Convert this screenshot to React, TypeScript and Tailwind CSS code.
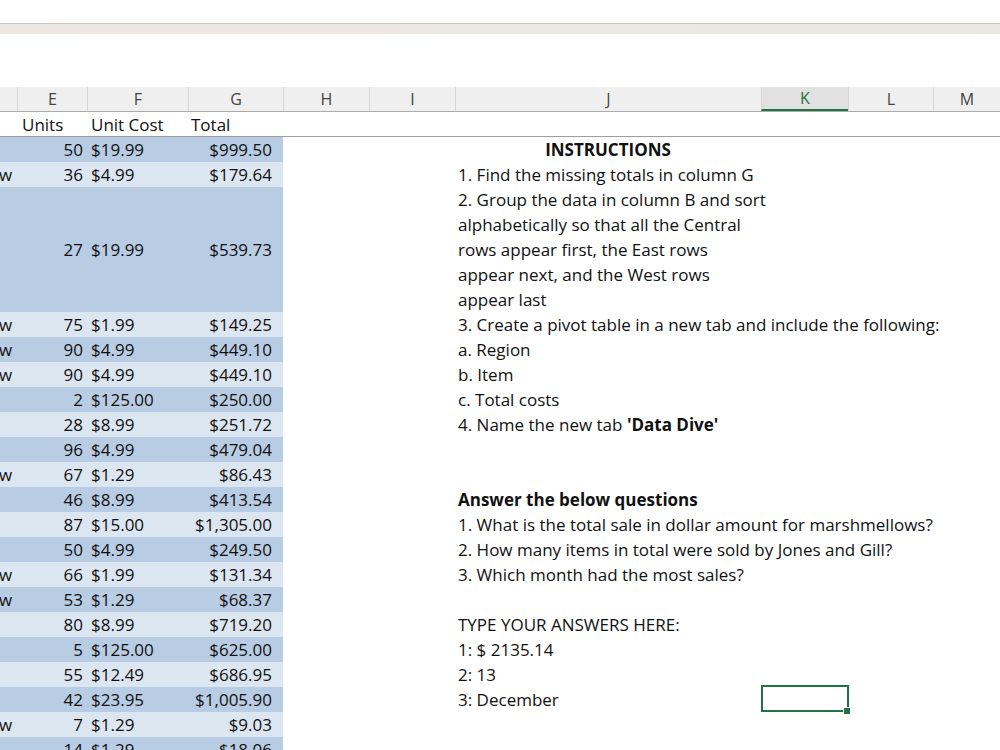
import React from "react";

type Row = {
  h?: number;
  dark: boolean;
  w?: boolean;
  u: string;
  c: string;
  t: string;
  j?: React.ReactNode;
  jc?: boolean;
  sel?: boolean;
};

const rows: Row[] = [
  { dark: true, u: "50", c: "$19.99", t: "$999.50", j: <span className="font-bold">INSTRUCTIONS</span>, jc: true },
  { dark: false, w: true, u: "36", c: "$4.99", t: "$179.64", j: "1. Find the missing totals in column G" },
  {
    h: 125,
    dark: true,
    u: "27",
    c: "$19.99",
    t: "$539.73",
    j: (
      <>
        2. Group the data in column B and sort
        <br />
        alphabetically so that all the Central
        <br />
        rows appear first, the East rows
        <br />
        appear next, and the West rows
        <br />
        appear last
      </>
    ),
  },
  { dark: false, w: true, u: "75", c: "$1.99", t: "$149.25", j: "3. Create a pivot table in a new tab and include the following:" },
  { dark: true, w: true, u: "90", c: "$4.99", t: "$449.10", j: "a. Region" },
  { dark: false, w: true, u: "90", c: "$4.99", t: "$449.10", j: "b. Item" },
  { dark: true, u: "2", c: "$125.00", t: "$250.00", j: "c. Total costs" },
  {
    dark: false,
    u: "28",
    c: "$8.99",
    t: "$251.72",
    j: (
      <>
        4. Name the new tab <span className="font-bold">'Data Dive'</span>
      </>
    ),
  },
  { dark: true, u: "96", c: "$4.99", t: "$479.04" },
  { dark: false, w: true, u: "67", c: "$1.29", t: "$86.43" },
  { dark: true, u: "46", c: "$8.99", t: "$413.54", j: <span className="font-bold">Answer the below questions</span> },
  { dark: false, u: "87", c: "$15.00", t: "$1,305.00", j: "1. What is the total sale in dollar amount for marshmellows?" },
  { dark: true, u: "50", c: "$4.99", t: "$249.50", j: "2. How many items in total were sold by Jones and Gill?" },
  { dark: false, w: true, u: "66", c: "$1.99", t: "$131.34", j: "3. Which month had the most sales?" },
  { dark: true, w: true, u: "53", c: "$1.29", t: "$68.37" },
  { dark: false, u: "80", c: "$8.99", t: "$719.20", j: "TYPE YOUR ANSWERS HERE:" },
  { dark: true, u: "5", c: "$125.00", t: "$625.00", j: "1: $ 2135.14" },
  { dark: false, u: "55", c: "$12.49", t: "$686.95", j: "2: 13" },
  { dark: true, u: "42", c: "$23.95", t: "$1,005.90", j: "3: December", sel: true },
  { dark: false, w: true, u: "7", c: "$1.29", t: "$9.03" },
  { dark: true, u: "14", c: "$1.29", t: "$18.06" },
];

const cols = [
  { l: "", w: 17 },
  { l: "E", w: 70 },
  { l: "F", w: 101 },
  { l: "G", w: 95 },
  { l: "H", w: 86 },
  { l: "I", w: 86 },
  { l: "J", w: 306 },
  { l: "K", w: 87 },
  { l: "L", w: 85 },
  { l: "M", w: 67 },
];

export default function App() {
  return (
    <div
      className="w-[1000px] h-[750px] overflow-hidden bg-white text-[#111] text-[17px]"
      style={{ fontFamily: '"Open Sans", "Noto Sans", sans-serif' }}
    >
      <div className="h-[23px] bg-white" />
      <div className="h-px bg-[#c9c9c9]" />
      <div className="h-[10px] bg-gradient-to-r from-[#ede7e0] via-[#ece8e2] to-[#ebe7e1]" />
      <div className="h-[53px] bg-white" />

      {/* column headers */}
      <div className="flex h-[25px] bg-[#efefef] border-b border-[#ababab]">
        {cols.map((c, i) => {
          const k = c.l === "K";
          return (
            <div
              key={i}
              style={{ width: c.w }}
              className={
                "shrink-0 flex items-center justify-center text-[16px] leading-none " +
                (i > 0 ? "border-l border-[#d6d6d6] " : "") +
                (k
                  ? "bg-[#e1e1e1] text-[#217346] border-b-2 border-b-[#217346]"
                  : "text-[#444]")
              }
            >
              {c.l}
            </div>
          );
        })}
      </div>

      {/* row 1 labels */}
      <div className="flex h-[25px] border-b border-[#9e9e9e] leading-[25px]">
        <div className="w-[17px] shrink-0" />
        <div className="w-[70px] shrink-0 pl-[5px]">Units</div>
        <div className="w-[101px] shrink-0 pl-[4px]">Unit Cost</div>
        <div className="w-[95px] shrink-0 pl-[3px]">Total</div>
      </div>

      {rows.map((r, i) => {
        const h = r.h ?? 25;
        const bg = r.dark ? "bg-[#b8cce4]" : "bg-[#dce6f1]";
        const tall = h > 25;
        return (
          <div key={i} className="flex leading-[25px]" style={{ height: h }}>
            <div className={"flex w-[283px] shrink-0 " + bg + (tall ? " items-center" : "")}>
              <div className="w-[17px] shrink-0 overflow-hidden">
                {r.w ? <span className="ml-[-1px]">w</span> : null}
              </div>
              <div className="w-[70px] shrink-0 text-right pr-[4px]">{r.u}</div>
              <div className="w-[101px] shrink-0 pl-[4px]">{r.c}</div>
              <div className="w-[95px] shrink-0 text-right pr-[11px]">{r.t}</div>
            </div>
            <div className="w-[172px] shrink-0" />
            <div
              className={
                "w-[306px] shrink-0 whitespace-nowrap relative z-10 " +
                (r.jc ? "text-center" : "pl-[3px]")
              }
            >
              {r.j}
            </div>
            <div className="w-[87px] shrink-0 relative">
              {r.sel ? (
                <>
                  <div className="absolute top-[-2px] left-0 w-[88px] h-[27px] border-2 border-[#217346]" />
                  <div className="absolute top-[20px] left-[82px] w-[6px] h-[6px] bg-[#217346] border border-white box-content" />
                </>
              ) : null}
            </div>
          </div>
        );
      })}
    </div>
  );
}
